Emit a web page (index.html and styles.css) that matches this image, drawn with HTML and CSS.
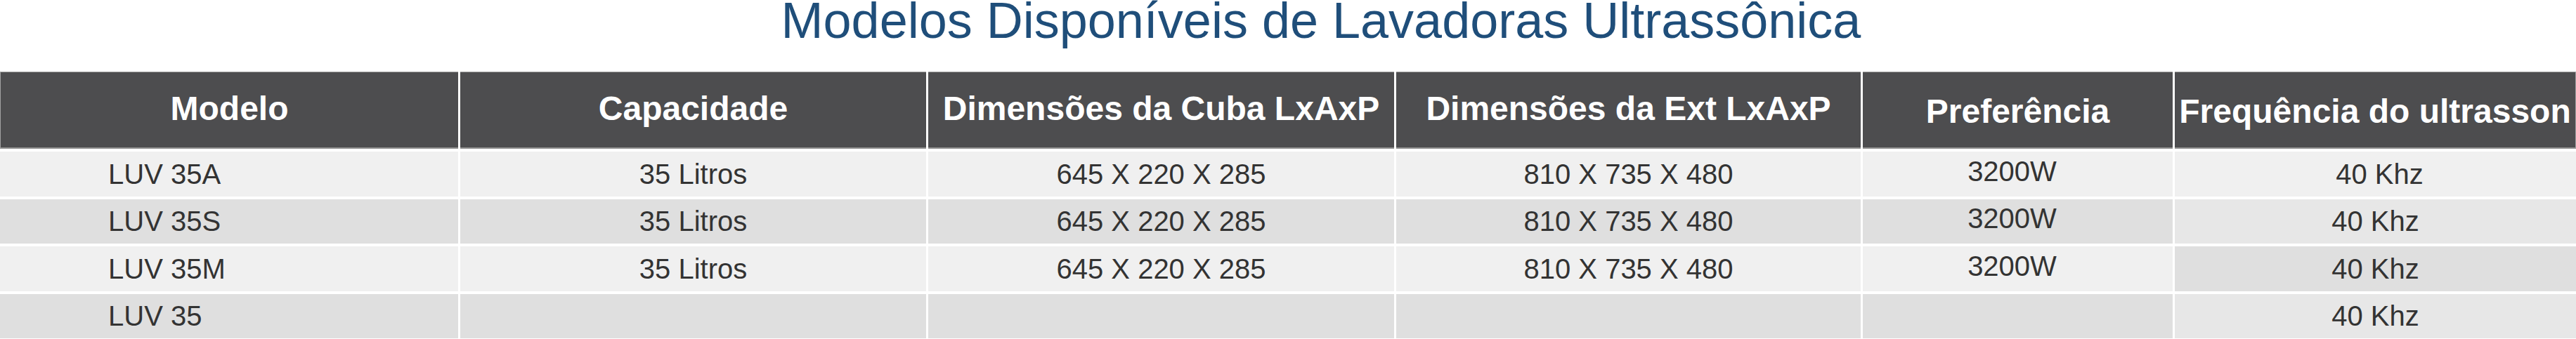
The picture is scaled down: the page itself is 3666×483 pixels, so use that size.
FILE: index.html
```html
<!DOCTYPE html>
<html lang="pt">
<head>
<meta charset="utf-8">
<title>Modelos Disponíveis de Lavadoras Ultrassônica</title>
<link rel="stylesheet" href="styles.css">
</head>
<body>
  <h1 class="title">Modelos Disponíveis de Lavadoras Ultrassônica</h1>
  <div class="grid">
    <div class="cell head head-first">Modelo</div>
    <div class="cell head">Capacidade</div>
    <div class="cell head">Dimensões da Cuba LxAxP</div>
    <div class="cell head">Dimensões da Ext LxAxP</div>
    <div class="cell head head-low">Preferência</div>
    <div class="cell head head-low head-last">Frequência do ultrasson</div>

    <div class="cell odd model">LUV 35A</div>
    <div class="cell odd">35 Litros</div>
    <div class="cell odd">645 X 220 X 285</div>
    <div class="cell odd">810 X 735 X 480</div>
    <div class="cell odd pref">3200W</div>
    <div class="cell odd freq-first">40 Khz</div>

    <div class="cell even model">LUV 35S</div>
    <div class="cell even">35 Litros</div>
    <div class="cell even">645 X 220 X 285</div>
    <div class="cell even">810 X 735 X 480</div>
    <div class="cell even pref">3200W</div>
    <div class="cell freq-light">40 Khz</div>

    <div class="cell odd model">LUV 35M</div>
    <div class="cell odd">35 Litros</div>
    <div class="cell odd">645 X 220 X 285</div>
    <div class="cell odd">810 X 735 X 480</div>
    <div class="cell odd pref">3200W</div>
    <div class="cell freq-dark">40 Khz</div>

    <div class="cell even model">LUV 35</div>
    <div class="cell even"></div>
    <div class="cell even"></div>
    <div class="cell even"></div>
    <div class="cell even"></div>
    <div class="cell freq-light">40 Khz</div>
  </div>
</body>
</html>
```

FILE: styles.css
```css
html, body {
  margin: 0;
  padding: 0;
  background: #ffffff;
  overflow: hidden;
}

body {
  font-family: "Liberation Sans", Arial, sans-serif;
  width: 3666px;
}

.title {
  margin: 0 0 44px 0;
  padding-left: 94px;
  height: 58px;
  line-height: 58px;
  font-size: 72px;
  font-weight: normal;
  color: #1f4e7a;
  text-align: center;
  white-space: nowrap;
}

.grid {
  display: grid;
  grid-template-columns: 652px 663px 663px 661px 441px 571px;
  grid-template-rows: 110px 64px 63px 64px 63px;
  column-gap: 3px;
  row-gap: 4px;
}

.cell {
  display: flex;
  align-items: center;
  justify-content: center;
  font-size: 40px;
  color: #333333;
  white-space: nowrap;
  box-sizing: border-box;
}

.head {
  background: #4d4d4f;
  color: #ffffff;
  font-weight: bold;
  font-size: 48px;
  border-top: 1px solid #a2a2a2;
  border-bottom: 2px solid #939393;
  padding-bottom: 4px;
}

.head-first {
  border-left: 1px solid #a2a2a2;
}

.head-last {
  border-right: 1px solid #a2a2a2;
}

.head-low {
  padding-bottom: 0;
  padding-top: 4px;
}

.odd {
  background: #f0f0f0;
}

.even {
  background: #dfdfdf;
}

.model {
  justify-content: flex-start;
  padding-left: 154px;
}

.pref {
  padding-right: 16px;
  padding-bottom: 8px;
}

.freq-first {
  background: #f0f0f0;
  padding-left: 12px;
}

.freq-light {
  background: #e7e7e7;
}

.freq-dark {
  background: #dfdfdf;
}
```
